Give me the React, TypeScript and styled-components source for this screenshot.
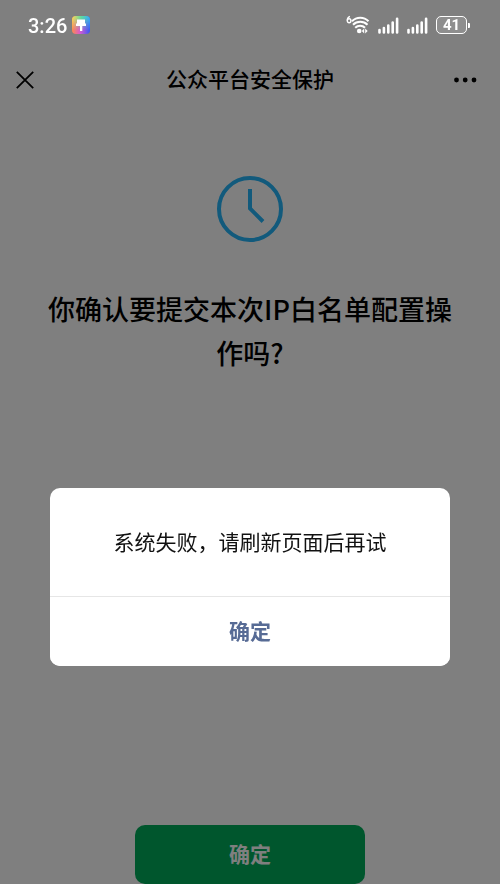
import React from "react";
import styled, { createGlobalStyle } from "styled-components";

const GlobalStyle = createGlobalStyle`
  *, *::before, *::after { box-sizing: border-box; }
  body {
    margin: 0;
    background: #ffffff;
    color: #000000;
    font-family: "Noto Sans CJK SC", "Noto Sans", sans-serif;
  }
  button { font-family: inherit; border: 0; padding: 0; cursor: pointer; }
`;

const Page = styled.div`
  min-height: 100vh;
  display: flex;
  flex-direction: column;
`;

const StatusBar = styled.header`
  position: relative;
  z-index: 2;
  height: 50px;
  padding: 0 30px 0 28px;
  display: flex;
  align-items: center;
  justify-content: space-between;
  color: #ffffff;
`;

const StatusGroup = styled.div<{ $gap: number }>`
  display: flex;
  align-items: center;
  gap: ${({ $gap }) => $gap}px;
`;

const Time = styled.time`
  padding-top: 2px;
  font: 500 20px/24px Roboto, sans-serif;
`;

const NavBar = styled.nav`
  height: 60px;
  padding: 0 15px;
  display: grid;
  grid-template-columns: 40px 1fr 40px;
  align-items: center;
`;

const NavTitle = styled.h1`
  margin: 0;
  padding-bottom: 4px;
  text-align: center;
  font-size: 21px;
  line-height: 30px;
  font-weight: 500;
`;

const IconButton = styled.button<{ $side: "start" | "end" }>`
  height: 40px;
  display: flex;
  align-items: center;
  justify-content: flex-${({ $side }) => $side};
  background: transparent;
  color: #000000;
`;

const Main = styled.main`
  flex: 1;
  padding: 65px 40px 0;
  display: flex;
  flex-direction: column;
  align-items: center;
`;

const Question = styled.h2`
  margin: 44px 0 0;
  text-align: center;
  font-size: 27px;
  line-height: 44px;
  font-weight: 500;
`;

const SubmitButton = styled.button`
  width: 230px;
  min-height: 59px;
  margin-top: auto;
  padding-bottom: 4px;
  border-radius: 10px;
  background: #00ad5a;
  color: #ffffff;
  font-size: 21px;
  line-height: 30px;
  font-weight: 700;
`;

const Mask = styled.div`
  position: fixed;
  inset: 0;
  z-index: 1;
  padding-top: 488px;
  background: rgba(0, 0, 0, 0.5);
`;

const Dialog = styled.section`
  width: 80%;
  margin: 0 auto;
  overflow: hidden;
  border-radius: 10px;
  background: #ffffff;
`;

const DialogMessage = styled.p`
  margin: 0;
  padding: 38px 24px 40px;
  text-align: center;
  font-size: 21px;
  line-height: 30px;
  color: #111111;
`;

const DialogButton = styled.button`
  display: block;
  width: 100%;
  min-height: 70px;
  padding-bottom: 4px;
  border-top: 1px solid #e6e6e6;
  background: #ffffff;
  color: #576b95;
  font-size: 21px;
  line-height: 30px;
  font-weight: 700;
`;

const AppBadge = () => (
  <svg width="18" height="18" viewBox="0 0 18 18" aria-hidden="true">
    <defs>
      <linearGradient id="badge-base" x1="0" y1="0" x2="1" y2="0">
        <stop offset="0" stopColor="#ff8a4c" />
        <stop offset="0.45" stopColor="#d65bd0" />
        <stop offset="1" stopColor="#3658f5" />
      </linearGradient>
      <linearGradient id="badge-top" x1="0" y1="0" x2="1" y2="0">
        <stop offset="0" stopColor="#ffd65a" />
        <stop offset="0.5" stopColor="#5fdc9c" />
        <stop offset="1" stopColor="#35aef8" />
      </linearGradient>
      <linearGradient id="badge-fade" x1="0" y1="0" x2="0" y2="1">
        <stop offset="0.1" stopColor="#ffffff" />
        <stop offset="0.8" stopColor="#000000" />
      </linearGradient>
      <mask id="badge-mask">
        <rect width="18" height="18" fill="url(#badge-fade)" />
      </mask>
    </defs>
    <rect width="18" height="18" rx="4" fill="url(#badge-base)" />
    <rect width="18" height="18" rx="4" fill="url(#badge-top)" mask="url(#badge-mask)" />
    <path d="M5 3.5h8v4H5zM4 7.5h10v2.5h-3.7v5H8v-5H4z" fill="#ffffff" />
  </svg>
);

const WifiIcon = () => (
  <svg width="24" height="20" viewBox="0 0 24 20" fill="none" stroke="currentColor" aria-hidden="true">
    <path d="M3.9 1.4C2.2 2 1.3 3.6 1.3 5.4" strokeWidth="1.4" />
    <ellipse cx="3.1" cy="5.8" rx="1.8" ry="2" strokeWidth="1.4" />
    <path d="M6 6.2C10.5 1.5 18 1.5 22.5 6.2" strokeWidth="2" />
    <path d="M7 9.7C11 5.7 17.5 5.7 21.5 9.7" strokeWidth="2" />
    <path d="M9.2 12.8C12 10 16.3 10 19 12.8" strokeWidth="2" />
    <circle cx="13.2" cy="16" r="2.3" fill="currentColor" stroke="none" />
    <path d="M18.2 13.5v5L15.8 16zM19.2 13.5v5l2.5-2.5z" fill="currentColor" stroke="none" />
  </svg>
);

const SignalIcon = () => (
  <svg width="21" height="17" viewBox="0 0 21 17" stroke="currentColor" strokeWidth="2.6" strokeLinecap="round" aria-hidden="true">
    <path d="M1.5 13v2.5M5.9 11v4.5M10.3 8.5v7M14.7 5.5v10M19.1 1.7v13.8" />
  </svg>
);

const BatteryShape = styled.span`
  display: flex;
  align-items: center;
`;

const BatteryBody = styled.span`
  width: 31px;
  height: 18px;
  display: grid;
  place-items: center;
  border: 1px solid #ffffff;
  border-radius: 5px;
  background: rgba(255, 255, 255, 0.12);
  font: 700 15px/16px Roboto, sans-serif;
`;

const BatteryTip = styled.span`
  width: 2px;
  height: 5px;
  margin-left: 1px;
  border-radius: 0 1px 1px 0;
  background: #ffffff;
`;

const CloseIcon = () => (
  <svg width="20" height="20" viewBox="0 0 20 20" stroke="currentColor" strokeWidth="1.8" aria-hidden="true">
    <path d="M1.8 1.8l16.4 16.4M18.2 1.8L1.8 18.2" />
  </svg>
);

const MoreIcon = () => (
  <svg width="32" height="6" viewBox="0 0 32 6" fill="currentColor" aria-hidden="true">
    <circle cx="3.5" cy="3" r="2.4" />
    <circle cx="12.2" cy="3" r="2.4" />
    <circle cx="21" cy="3" r="2.4" />
  </svg>
);

const ClockIcon = () => (
  <svg width="68" height="68" viewBox="0 0 68 68" fill="none" stroke="#24b4f8" strokeWidth="4" aria-hidden="true">
    <circle cx="34" cy="34" r="31" />
    <path d="M34 14v19.5l13 13" />
  </svg>
);

export default function App() {
  return (
    <>
      <GlobalStyle />
      <Page>
        <StatusBar>
          <StatusGroup $gap={5}>
            <Time>3:26</Time>
            <AppBadge />
          </StatusGroup>
          <StatusGroup $gap={8}>
            <WifiIcon />
            <SignalIcon />
            <SignalIcon />
            <BatteryShape>
              <BatteryBody>41</BatteryBody>
              <BatteryTip />
            </BatteryShape>
          </StatusGroup>
        </StatusBar>
        <NavBar>
          <IconButton $side="start" aria-label="关闭">
            <CloseIcon />
          </IconButton>
          <NavTitle>公众平台安全保护</NavTitle>
          <IconButton $side="end" aria-label="更多">
            <MoreIcon />
          </IconButton>
        </NavBar>
        <Main>
          <ClockIcon />
          <Question>你确认要提交本次IP白名单配置操作吗?</Question>
          <SubmitButton>确定</SubmitButton>
        </Main>
      </Page>
      <Mask>
        <Dialog role="alertdialog" aria-modal="true" aria-describedby="dialog-message">
          <DialogMessage id="dialog-message">系统失败，请刷新页面后再试</DialogMessage>
          <DialogButton>确定</DialogButton>
        </Dialog>
      </Mask>
    </>
  );
}
